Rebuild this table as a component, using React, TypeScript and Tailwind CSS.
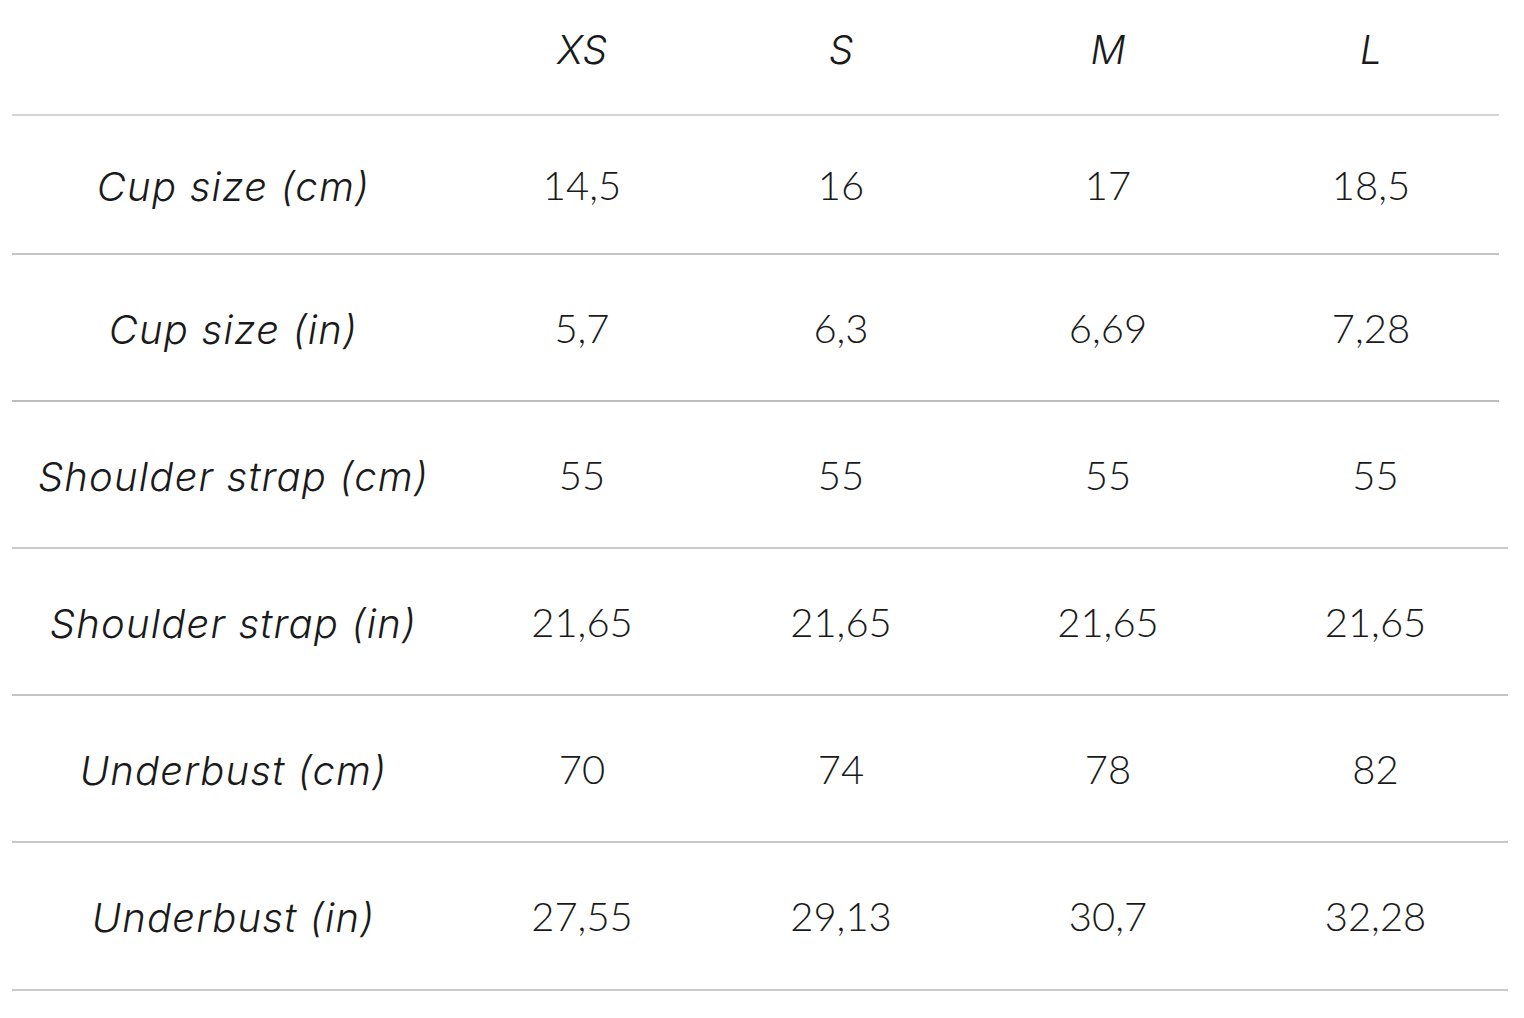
const sizes = ['XS', 'S', 'M', 'L']

const rows: { label: string; values: string[]; h: string; w: string; line: string }[] = [
  { label: 'Cup size (cm)', values: ['14,5', '16', '17', '18,5'], h: 'h-[137px]', w: 'w-[1487px]', line: 'border-[#c4c4c4]' },
  { label: 'Cup size (in)', values: ['5,7', '6,3', '6,69', '7,28'], h: 'h-[145px]', w: 'w-[1487px]', line: 'border-[#bdbdbd]' },
  { label: 'Shoulder strap (cm)', values: ['55', '55', '55', '55'], h: 'h-[145px]', w: 'w-[1496px]', line: 'border-[#cacaca]' },
  { label: 'Shoulder strap (in)', values: ['21,65', '21,65', '21,65', '21,65'], h: 'h-[145px]', w: 'w-[1496px]', line: 'border-[#c4c4c4]' },
  { label: 'Underbust (cm)', values: ['70', '74', '78', '82'], h: 'h-[145px]', w: 'w-[1496px]', line: 'border-[#c8c8c8]' },
  { label: 'Underbust (in)', values: ['27,55', '29,13', '30,7', '32,28'], h: 'h-[146px]', w: 'w-[1496px]', line: 'border-[#cacaca]' },
]

const cols = 'grid grid-cols-[443px_254px_264px_270px_1fr]'

export default function App() {
  return (
    <div className="min-h-screen bg-white text-[#1a1a1a] font-['Lato','Open_Sans',sans-serif] font-light">
      <div className="ml-[12px]">
        {/* Header */}
        <div className={`${cols} w-[1487px] h-[116px] border-b-2 border-[#d4d4d4] items-center pb-[14px] text-[39px] italic font-['Inter',sans-serif]`}>
          <div />
          {sizes.map(s => (
            <div key={s} className="text-center">{s}</div>
          ))}
        </div>

        {/* Rows */}
        {rows.map(row => (
          <div key={row.label} className={`${cols} ${row.w} ${row.h} border-b-2 ${row.line} items-center text-[40px] box-content`}>
            <div className="text-center italic font-['Inter',sans-serif] text-[40px] tracking-[1.2px] pt-[4px]">{row.label}</div>
            {row.values.map((v, i) => (
              <div key={i} className="text-center">{v}</div>
            ))}
          </div>
        ))}
      </div>
    </div>
  )
}
